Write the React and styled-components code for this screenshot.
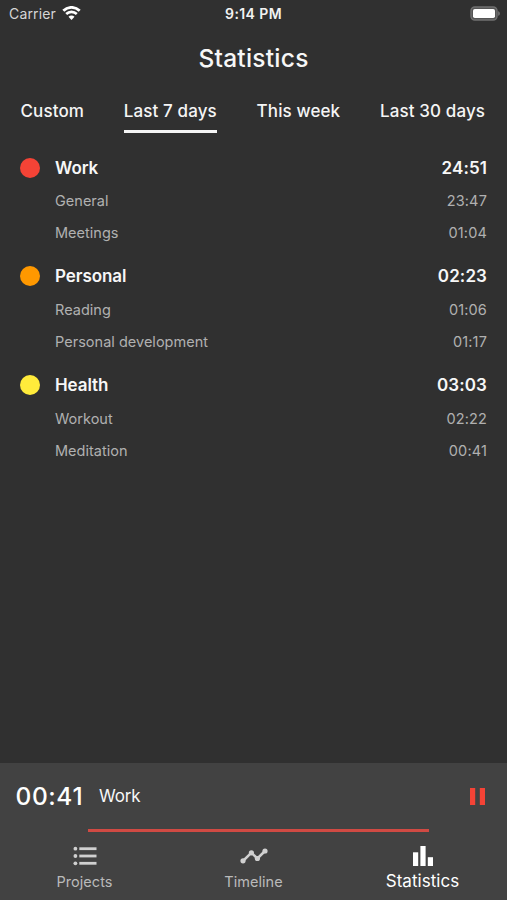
import React, { useState } from "react";
import styled, { createGlobalStyle } from "styled-components";

/* ─── Data ─── */

const ranges = ["Custom", "Last 7 days", "This week", "Last 30 days"];

const projects = [
  {
    name: "Work",
    total: "24:51",
    color: "#f44336",
    tasks: [
      { name: "General", time: "23:47" },
      { name: "Meetings", time: "01:04" },
    ],
  },
  {
    name: "Personal",
    total: "02:23",
    color: "#ff9800",
    tasks: [
      { name: "Reading", time: "01:06" },
      { name: "Personal development", time: "01:17" },
    ],
  },
  {
    name: "Health",
    total: "03:03",
    color: "#ffeb3b",
    tasks: [
      { name: "Workout", time: "02:22" },
      { name: "Meditation", time: "00:41" },
    ],
  },
];

/* ─── Layout ─── */

const GlobalStyle = createGlobalStyle`
  body {
    margin: 0;
    background: #303030;
    font-family: Inter, "Liberation Sans", sans-serif;
  }

  button {
    font-family: inherit;
    border: none;
    background: none;
    padding: 0;
    cursor: pointer;
  }
`;

const Screen = styled.div`
  width: 100%;
  height: 100vh;
  min-height: 900px;
  display: flex;
  flex-direction: column;
  background: #303030;
  color: #ffffff;
  overflow: hidden;
  white-space: nowrap;
`;

const StatusBar = styled.div`
  display: grid;
  grid-template-columns: 1fr auto 1fr;
  align-items: center;
  height: 27px;
  padding: 0 7px 0 9px;
`;

const Carrier = styled.div`
  display: flex;
  align-items: center;
  gap: 6px;
  font-size: 14px;
  letter-spacing: 0.15px;
  color: #d6d6d6;
`;

const Clock = styled.div`
  margin-right: 2px;
  font-size: 14px;
  font-weight: 600;
  letter-spacing: 0.4px;
  color: #f2f2f2;
`;

const Battery = styled.svg`
  justify-self: end;
`;

const Title = styled.h1`
  margin: 0;
  height: 63px;
  line-height: 62px;
  font-size: 24.5px;
  font-weight: 500;
  letter-spacing: 0.25px;
  text-align: center;
  color: #f7f7f7;
`;

const Tabs = styled.div`
  display: flex;
  gap: 39.7px;
  height: 43px;
  padding-left: 20.5px;
`;

const Tab = styled.button`
  height: 43px;
  box-sizing: border-box;
  padding-top: 2px;
  display: flex;
  flex-direction: column;
  justify-content: space-between;
  font-size: 17px;
  line-height: 38px;
  font-weight: 500;
  letter-spacing: 0.12px;
  color: #f5f5f5;
  border-bottom: 3px solid ${({ $active }) => ($active ? "#f5f5f5" : "transparent")};
`;

const Report = styled.div`
  flex: 1;
  padding: 17px 20px 0;
`;

const Project = styled.section`
  height: 108.8px;
`;

const Row = styled.div`
  display: flex;
  align-items: center;
`;

const ProjectRow = styled(Row)`
  height: 35px;
  font-size: 17px;
  font-weight: 600;
  letter-spacing: -0.08px;
  color: #f7f7f7;
`;

const Total = styled.span`
  letter-spacing: 0.1px;
`;

const TaskRow = styled(Row)`
  height: 31.8px;
  padding-left: 35px;
  font-size: 14.5px;
  letter-spacing: 0.02px;
  color: #b0b0b0;
`;

const Dot = styled.span`
  width: 20px;
  height: 20px;
  margin-right: 15px;
  border-radius: 50%;
  background: ${({ $color }) => $color};
`;

const Name = styled.span`
  flex: 1;
`;

const Time = styled.span`
  letter-spacing: 0.15px;
`;

/* ─── Bottom panel ─── */

const Footer = styled.footer`
  height: 137px;
  background: #424242;
`;

const Timer = styled.div`
  display: flex;
  align-items: center;
  height: 66px;
  padding: 0 22px 0 15.5px;
`;

const Elapsed = styled.div`
  width: 83.5px;
  font-size: 24.5px;
  font-weight: 500;
  letter-spacing: 0.6px;
`;

const Current = styled.div`
  flex: 1;
  font-size: 17px;
  letter-spacing: -0.15px;
  color: #f7f7f7;
`;

const PauseButton = styled.button`
  display: flex;
  color: #f44336;
`;

const Progress = styled.div`
  width: 341px;
  height: 3px;
  margin-left: 88px;
  background: #d04a43;
`;

const NavBar = styled.nav`
  display: grid;
  grid-template-columns: repeat(3, 1fr);
  padding-top: 14px;
`;

const NavItem = styled.button`
  display: flex;
  flex-direction: column;
  align-items: center;
  gap: ${({ $active }) => ($active ? "4.5px" : "6px")};
  font-size: ${({ $active }) => ($active ? "17px" : "14.5px")};
  letter-spacing: 0.05px;
  line-height: 20px;
  color: ${({ $active }) => ($active ? "#ffffff" : "#bababa")};
`;

/* ─── Icons ─── */

const WifiIcon = () => (
  <svg width="19" height="15" viewBox="0 0 19 15" fill="none" stroke="#ffffff">
    <path d="M1.3 4.8C6 .2 13 .2 17.7 4.8" strokeWidth="2.8" />
    <path d="M4.2 8C7.2 5.1 11.8 5.1 14.8 8" strokeWidth="2.6" />
    <path d="M9.5 13.9 6.5 10.8C8.2 9.2 10.8 9.2 12.5 10.8Z" fill="#ffffff" stroke="none" />
  </svg>
);

const BatteryIcon = () => (
  <Battery width="30" height="15" viewBox="0 0 30 15">
    <rect x="1" y="1" width="26" height="13" rx="3.8" fill="#555" stroke="#707070" strokeWidth="1.4" />
    <rect x="3" y="3" width="22" height="9" rx="1.8" fill="#ffffff" />
    <path d="M28.2 5.2C30.4 5.9 30.4 9.1 28.2 9.8Z" fill="#777" />
  </Battery>
);

const ListIcon = () => (
  <svg width="24" height="20" viewBox="0 0 24 20" fill="#d0d0d0">
    {[2.7, 10, 17.3].map((y) => (
      <React.Fragment key={y}>
        <circle cx="2.4" cy={y} r="1.9" />
        <rect x="6.3" y={y - 1.4} width="17.2" height="2.8" />
      </React.Fragment>
    ))}
  </svg>
);

const TimelineIcon = () => (
  <svg width="28" height="20" viewBox="0 0 28 20" fill="#d0d0d0">
    <path d="M3 15 11.4 6.7 17.4 12.5 25 5" fill="none" stroke="#d0d0d0" strokeWidth="2.5" />
    <circle cx="3" cy="14.8" r="2.6" />
    <circle cx="11.4" cy="6.8" r="2.6" />
    <circle cx="17.4" cy="12.5" r="2.6" />
    <circle cx="25" cy="5" r="2.6" />
  </svg>
);

const ChartIcon = () => (
  <svg width="20" height="20" viewBox="0 0 20 20" fill="#ffffff">
    <rect x="0" y="6.3" width="5.2" height="13.7" />
    <rect x="7.4" y="0" width="5.2" height="20" />
    <rect x="14.8" y="11.2" width="5.2" height="8.8" />
  </svg>
);

const PauseIcon = () => (
  <svg width="15" height="17" viewBox="0 0 15 17" fill="currentColor">
    <rect width="5.2" height="17" />
    <rect x="9.8" width="5.2" height="17" />
  </svg>
);

const screens = [
  { label: "Projects", icon: <ListIcon /> },
  { label: "Timeline", icon: <TimelineIcon /> },
  { label: "Statistics", icon: <ChartIcon /> },
];

export default function App() {
  const [range, setRange] = useState("Last 7 days");

  return (
    <>
      <GlobalStyle />
      <Screen>
        <StatusBar>
          <Carrier>
            Carrier
            <WifiIcon />
          </Carrier>
          <Clock>9:14 PM</Clock>
          <BatteryIcon />
        </StatusBar>

        <Title>Statistics</Title>

        <Tabs>
          {ranges.map((label) => (
            <Tab key={label} $active={label === range} onClick={() => setRange(label)}>
              {label}
            </Tab>
          ))}
        </Tabs>

        <Report>
          {projects.map((project) => (
            <Project key={project.name}>
              <ProjectRow>
                <Dot $color={project.color} />
                <Name>{project.name}</Name>
                <Total>{project.total}</Total>
              </ProjectRow>
              {project.tasks.map((task) => (
                <TaskRow key={task.name}>
                  <Name>{task.name}</Name>
                  <Time>{task.time}</Time>
                </TaskRow>
              ))}
            </Project>
          ))}
        </Report>

        <Footer>
          <Timer>
            <Elapsed>00:41</Elapsed>
            <Current>Work</Current>
            <PauseButton aria-label="Pause">
              <PauseIcon />
            </PauseButton>
          </Timer>
          <Progress />
          <NavBar>
            {screens.map(({ label, icon }) => (
              <NavItem key={label} $active={label === "Statistics"}>
                {icon}
                {label}
              </NavItem>
            ))}
          </NavBar>
        </Footer>
      </Screen>
    </>
  );
}
